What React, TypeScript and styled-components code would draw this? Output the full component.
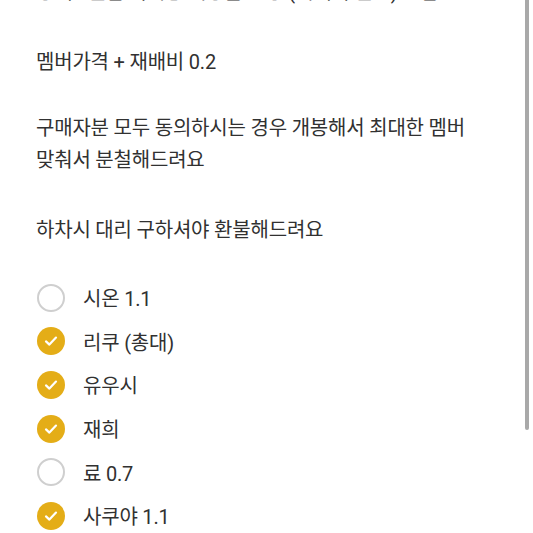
import styled, { createGlobalStyle } from 'styled-components';

const Global = createGlobalStyle`
  html, body { margin: 0; padding: 0; background: #fff; }
  body {
    font-family: Roboto, "Noto Sans CJK KR", "Noto Sans", sans-serif;
    color: #313131;
    overflow: hidden;
  }
`;

const Page = styled.div`
  position: relative;
  width: 533px;
  height: 533px;
  overflow: hidden;
`;

const Content = styled.div`
  display: flex;
  flex-direction: column;
  padding: 0 36px;
  margin-top: -24px;
`;

const Para = styled.p<{ gap?: number }>`
  margin: 0 0 ${(p) => p.gap ?? 34}px;
  font-size: 20px;
  line-height: 32px;
  letter-spacing: -0.2px;
`;

const List = styled.ul`
  list-style: none;
  margin: 0;
  padding: 0;
  display: flex;
  flex-direction: column;
`;

const Item = styled.li`
  display: flex;
  align-items: center;
  gap: 18px;
  height: 43.6px;
  font-size: 20px;
  letter-spacing: -0.2px;
`;

const Circle = styled.span<{ checked: boolean }>`
  width: 28px;
  height: 28px;
  box-sizing: border-box;
  border-radius: 50%;
  flex-shrink: 0;
  display: flex;
  align-items: center;
  justify-content: center;
  background: ${(p) => (p.checked ? '#e4ad17' : '#fff')};
  border: ${(p) => (p.checked ? 'none' : '2px solid #cfcfcf')};
  margin-left: 1px;
`;

const ScrollBar = styled.div`
  position: absolute;
  top: 0;
  right: 4px;
  width: 4px;
  height: 430px;
  background: #a9a9a9;
  border-radius: 0 0 2px 2px;
`;

const Check = () => (
  <svg width="18" height="18" viewBox="0 0 18 18" fill="none">
    <path d="M4 9.4 L7.4 12.6 L14 5.6" stroke="#fff" strokeWidth="2.2" strokeLinecap="round" strokeLinejoin="round" />
  </svg>
);

const options = [
  { label: '시온 1.1', checked: false },
  { label: '리쿠 (총대)', checked: true },
  { label: '유우시', checked: true },
  { label: '재희', checked: true },
  { label: '료 0.7', checked: false },
  { label: '사쿠야 1.1', checked: true },
];

export default function App() {
  return (
    <Page>
      <Global />
      <Content>
        <Para gap={38}>상태 - 앨범 미개봉 새상품 포장 (택배비 별도) 포함</Para>
        <Para>멤버가격 + 재배비 0.2</Para>
        <Para gap={38}>
          구매자분 모두 동의하시는 경우 개봉해서 최대한 멤버
          <br />
          맞춰서 분철해드려요
        </Para>
        <Para gap={30}>하차시 대리 구하셔야 환불해드려요</Para>
        <List>
          {options.map((o) => (
            <Item key={o.label}>
              <Circle checked={o.checked}>{o.checked && <Check />}</Circle>
              {o.label}
            </Item>
          ))}
        </List>
      </Content>
      <ScrollBar />
    </Page>
  );
}
